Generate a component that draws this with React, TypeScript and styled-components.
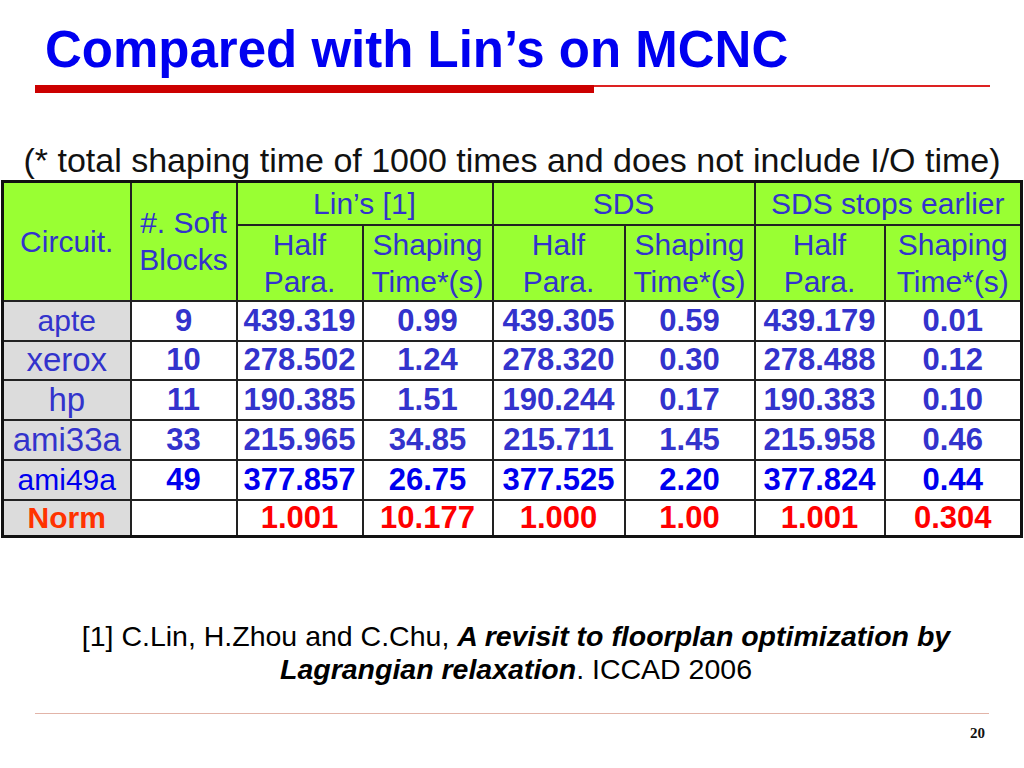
import React from "react";
import styled, { createGlobalStyle } from "styled-components";

const Global = createGlobalStyle`
  html, body { margin: 0; padding: 0; background: #ffffff; }
  body { font-family: "Liberation Sans", Arial, sans-serif; }
`;

const Slide = styled.div`
  width: 1024px;
  height: 768px;
  background: #ffffff;
  overflow: hidden;
  display: flex;
  flex-direction: column;
`;

const Title = styled.h1`
  margin: 0;
  padding: 20px 0 0 45px;
  height: 60px;
  font-family: "Liberation Sans", Arial, sans-serif;
  font-weight: 700;
  font-size: 51px;
  line-height: 60px;
  color: #0000f0;
  white-space: nowrap;
`;

const Rule = styled.div`
  margin: 5px 0 0 35px;
  width: 955px;
  display: flex;
  align-items: flex-start;
`;

const ThickBar = styled.div`
  width: 559px;
  height: 8px;
  background: #cc0000;
`;

const ThinLine = styled.div`
  flex: 1;
  height: 1.5px;
  background: #dd2222;
`;

const Subtitle = styled.p`
  margin: 48px 0 0 0;
  text-align: center;
  font-size: 34px;
  line-height: 39px;
  color: #111111;
  white-space: nowrap;
`;

const Table = styled.table`
  margin-left: 1px;
  width: 1019px;
  border-collapse: collapse;
  table-layout: fixed;
  border: 3px solid #111111;
`;

const HeadCell = styled.th`
  background: #99ff33;
  color: #3333cc;
  font-weight: 400;
  font-size: 30px;
  line-height: 37px;
  text-align: center;
  vertical-align: middle;
  padding: 0;
  border: 2px solid #222222;
  white-space: nowrap;
`;

const HeadRow = styled.tr<{ $h: number }>`
  height: ${(p) => p.$h}px;
`;

const DataRow = styled.tr<{ $h: number }>`
  height: ${(p) => p.$h}px;
`;

const NameCell = styled.td<{ $color: string; $size: number; $bold?: boolean }>`
  background: #dcdcdc;
  color: ${(p) => p.$color};
  font-size: ${(p) => p.$size}px;
  font-weight: ${(p) => (p.$bold ? 700 : 400)};
  line-height: 34px;
  text-align: center;
  vertical-align: middle;
  padding: 0;
  border: 2px solid #222222;
  white-space: nowrap;
`;

const NumCell = styled.td<{ $color: string }>`
  background: #ffffff;
  color: ${(p) => p.$color};
  font-size: 31px;
  font-weight: 700;
  line-height: 34px;
  text-align: center;
  vertical-align: middle;
  padding: 0;
  border: 2px solid #222222;
  white-space: nowrap;
`;

const Footer = styled.p`
  margin: 82px 0 0 0;
  padding-left: 8px;
  text-align: center;
  font-size: 28.5px;
  line-height: 33px;
  color: #000000;
  white-space: nowrap;
`;

const Emph = styled.b`
  font-weight: 700;
  font-style: italic;
`;

const BottomRule = styled.div`
  margin: 27px 0 0 35px;
  width: 954px;
  height: 1px;
  background: #e2b4a8;
`;

const PageNum = styled.div`
  margin: 12px 0 0 0;
  padding-right: 39px;
  text-align: right;
  font-family: "Liberation Serif", "Times New Roman", serif;
  font-weight: 700;
  font-size: 15px;
  line-height: 15px;
  color: #111111;
`;

type Row = {
  name: string;
  nameSize: number;
  nameColor: string;
  nameBold?: boolean;
  color: string;
  h: number;
  values: string[];
};

const PURPLE = "#3333cc";
const BLUE = "#0000ee";
const RED = "#ff0000";

const rows: Row[] = [
  { name: "apte", nameSize: 30, nameColor: PURPLE, color: PURPLE, h: 40, values: ["9", "439.319", "0.99", "439.305", "0.59", "439.179", "0.01"] },
  { name: "xerox", nameSize: 33, nameColor: PURPLE, color: PURPLE, h: 39, values: ["10", "278.502", "1.24", "278.320", "0.30", "278.488", "0.12"] },
  { name: "hp", nameSize: 33, nameColor: PURPLE, color: PURPLE, h: 40, values: ["11", "190.385", "1.51", "190.244", "0.17", "190.383", "0.10"] },
  { name: "ami33a", nameSize: 33, nameColor: PURPLE, color: PURPLE, h: 40, values: ["33", "215.965", "34.85", "215.711", "1.45", "215.958", "0.46"] },
  { name: "ami49a", nameSize: 30, nameColor: BLUE, color: BLUE, h: 40, values: ["49", "377.857", "26.75", "377.525", "2.20", "377.824", "0.44"] },
  { name: "Norm", nameSize: 30, nameColor: "#ff3300", nameBold: true, color: RED, h: 37, values: ["", "1.001", "10.177", "1.000", "1.00", "1.001", "0.304"] },
];

const colWidths = [128, 106, 126, 130, 132, 130, 130, 137];

export default function App() {
  return (
    <>
      <Global />
      <Slide>
        <Title>Compared with Lin’s on MCNC</Title>
        <Rule>
          <ThickBar />
          <ThinLine />
        </Rule>
        <Subtitle>(* total shaping time of 1000 times and does not include I/O time)</Subtitle>
        <Table>
          <colgroup>
            {colWidths.map((w, i) => (
              <col key={i} style={{ width: w }} />
            ))}
          </colgroup>
          <thead>
            <HeadRow $h={43}>
              <HeadCell rowSpan={2}>Circuit.</HeadCell>
              <HeadCell rowSpan={2}>
                #. Soft
                <br />
                Blocks
              </HeadCell>
              <HeadCell colSpan={2}>Lin’s [1]</HeadCell>
              <HeadCell colSpan={2}>SDS</HeadCell>
              <HeadCell colSpan={2}>SDS stops earlier</HeadCell>
            </HeadRow>
            <HeadRow $h={75}>
              {[0, 1, 2].map((i) => (
                <React.Fragment key={i}>
                  <HeadCell>
                    Half
                    <br />
                    Para.
                  </HeadCell>
                  <HeadCell>
                    Shaping
                    <br />
                    Time*(s)
                  </HeadCell>
                </React.Fragment>
              ))}
            </HeadRow>
          </thead>
          <tbody>
            {rows.map((r) => (
              <DataRow key={r.name} $h={r.h}>
                <NameCell $color={r.nameColor} $size={r.nameSize} $bold={r.nameBold}>
                  {r.name}
                </NameCell>
                {r.values.map((v, i) => (
                  <NumCell key={i} $color={r.color}>
                    {v}
                  </NumCell>
                ))}
              </DataRow>
            ))}
          </tbody>
        </Table>
        <Footer>
          [1] C.Lin, H.Zhou and C.Chu, <Emph>A revisit to floorplan optimization by</Emph>
          <br />
          <Emph>Lagrangian relaxation</Emph>. ICCAD 2006
        </Footer>
        <BottomRule />
        <PageNum>20</PageNum>
      </Slide>
    </>
  );
}
